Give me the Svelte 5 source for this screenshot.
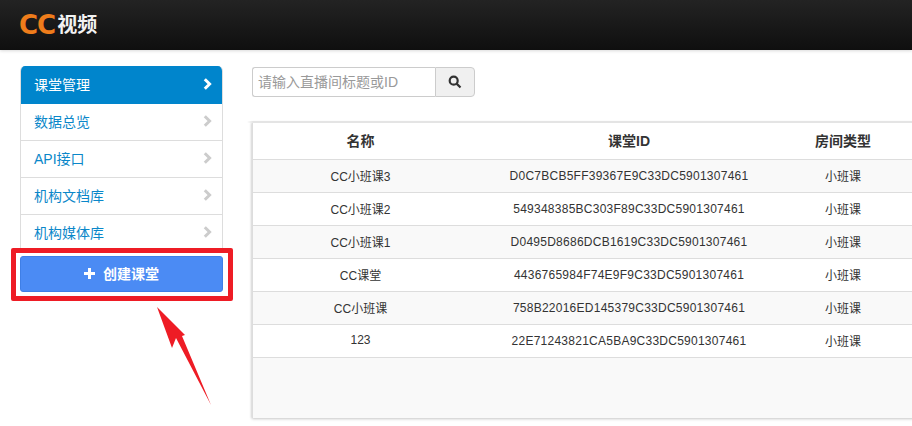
<script>
  const menu = ['数据总览', 'API接口', '机构文档库', '机构媒体库'];
  const rows = [
    ['CC小班课3', 'D0C7BCB5FF39367E9C33DC5901307461'],
    ['CC小班课2', '549348385BC303F89C33DC5901307461'],
    ['CC小班课1', 'D0495D8686DCB1619C33DC5901307461'],
    ['CC课堂', '4436765984F74E9F9C33DC5901307461'],
    ['CC小班课', '758B22016ED145379C33DC5901307461'],
    ['123', '22E71243821CA5BA9C33DC5901307461']
  ];
</script>

<div class="page">
  <header class="top">
    <span class="cc">CC</span><span class="video">视频</span>
  </header>
  <div class="body">
    <aside class="side">
      <nav class="menu">
        <a class="item active">
          <span>课堂管理</span>
          <svg class="chev" viewBox="0 0 9 12"><path d="M1.8 1.2 6.6 6 1.8 10.8" /></svg>
        </a>
        {#each menu as m}
          <a class="item">
            <span>{m}</span>
            <svg class="chev" viewBox="0 0 9 12"><path d="M1.8 1.2 6.6 6 1.8 10.8" /></svg>
          </a>
        {/each}
      </nav>
      <button class="create">
        <svg class="plus" viewBox="0 0 11 11"><path d="M4 0h3v4h4v3H7v4H4V7H0V4h4z" /></svg>
        <span>创建课堂</span>
      </button>
    </aside>
    <main class="main">
      <div class="search">
        <input placeholder="请输入直播间标题或ID" />
        <button class="go" aria-label="搜索">
          <svg viewBox="0 0 14 14"><circle cx="5.7" cy="5.7" r="4" /><path d="M8.6 8.6 12.5 12.5" /></svg>
        </button>
      </div>
      <section class="panel">
        <div class="row head">
          <div>名称</div><div>课堂ID</div><div>房间类型</div>
        </div>
        {#each rows as r}
          <div class="row">
            <div>{r[0]}</div><div class="id">{r[1]}</div><div>小班课</div>
          </div>
        {/each}
      </section>
    </main>
  </div>

  <div class="mark"></div>
  <svg class="arrow" viewBox="0 0 80 110"><polygon points="7,7 35,35 32,36 61,105 26,38 22,48" /></svg>
</div>

<style>
  :global(body) {
    margin: 0;
    background: #fff;
    overflow: hidden;
  }
  .page {
    position: relative;
    width: 912px;
    height: 426px;
    overflow: hidden;
    font-family: "Liberation Sans", "Noto Sans CJK SC", sans-serif;
    color: #333;
  }
  .top {
    height: 50px;
    box-sizing: border-box;
    padding-left: 19px;
    display: flex;
    align-items: center;
    gap: 2px;
    background: linear-gradient(#232323, #0f0f0f);
    box-shadow: 0 1px 3px rgba(0, 0, 0, .15);
  }
  .cc {
    font-family: "DejaVu Sans", "Liberation Sans", sans-serif;
    font-weight: 700;
    font-size: 26px;
    line-height: 1;
    color: #ee7c1b;
    letter-spacing: -1px;
  }
  .video {
    font-weight: 700;
    font-size: 20px;
    line-height: 1;
    color: #f2f2f2;
  }
  .body {
    display: flex;
    align-items: flex-start;
    padding: 16px 0 0 20px;
  }
  .side {
    width: 203px;
    flex: none;
  }
  .menu {
    display: flex;
    flex-direction: column;
    height: 184px;
    overflow: hidden;
    border: 1px solid #ddd;
    border-width: 0 1px;
    box-sizing: border-box;
    border-radius: 5px 5px 0 0;
  }
  .item {
    height: 37px;
    flex: none;
    box-sizing: border-box;
    padding: 0 10px 2px 13px;
    display: flex;
    align-items: center;
    justify-content: space-between;
    font-size: 14px;
    color: #0a87c9;
    border-bottom: 1px solid #ddd;
  }
  .item.active {
    height: 38px;
    margin: 0 -1px;
    padding: 0 11px 2px 14px;
    background: #0085cc;
    color: #fff;
    border-bottom: 0;
  }
  .chev {
    width: 9px;
    height: 12px;
    fill: none;
    stroke: #ccc;
    stroke-width: 3;
  }
  .active .chev {
    stroke: #fff;
  }
  .create {
    width: 203px;
    height: 36px;
    margin-top: 6px;
    padding: 0 0 2px;
    box-sizing: border-box;
    display: flex;
    align-items: center;
    justify-content: center;
    gap: 8px;
    background: #4b8bf4;
    border: 1px solid #3f7fe6;
    border-radius: 3px;
    color: #fff;
    font: 700 14px "Liberation Sans", "Noto Sans CJK SC", sans-serif;
  }
  .plus {
    width: 11px;
    height: 11px;
    fill: #fff;
  }
  .main {
    flex: 1;
    min-width: 0;
    padding-left: 29px;
  }
  .search {
    display: flex;
    height: 30px;
    width: 223px;
    margin-top: 1px;
  }
  .search input {
    width: 183px;
    box-sizing: border-box;
    height: 30px;
    border: 1px solid #ccc;
    border-right: 0;
    border-radius: 3px 0 0 3px;
    padding: 0 5px;
    font: 14px "Liberation Sans", "Noto Sans CJK SC", sans-serif;
    outline: none;
  }
  .search input::placeholder {
    color: #999;
    opacity: 1;
  }
  .go {
    width: 40px;
    height: 30px;
    padding: 0;
    box-sizing: border-box;
    background: #f0f0f0;
    border: 1px solid #ccc;
    border-radius: 0 4px 4px 0;
    display: flex;
    align-items: center;
    justify-content: center;
  }
  .go svg {
    width: 14px;
    height: 14px;
    fill: none;
    stroke: #333;
    stroke-width: 2.2;
  }
  .panel {
    position: relative;
    margin-top: 25px;
    width: 700px;
    height: 296px;
    box-sizing: border-box;
    background: #f9f9f9;
    border-left: 1px solid #ddd;
    box-shadow: 0 1px 3px rgba(0, 0, 0, .2), -1px 0 2px rgba(0, 0, 0, .08);
  }
  .panel::before {
    content: "";
    position: absolute;
    left: -6px;
    right: 0;
    top: -1px;
    height: 2px;
    background: linear-gradient(90deg, #fff, #e4e4e4 6px);
  }
  .row {
    display: grid;
    grid-template-columns: 215px 322px 106px 1fr;
    height: 33px;
    box-sizing: border-box;
    padding-bottom: 2px;
    align-items: center;
    text-align: center;
    font-size: 12px;
    color: #333;
    border-bottom: 1px solid #ddd;
    background: #fff;
  }
  .row:nth-child(even) {
    background: #f9f9f9;
  }
  .row.head {
    height: 38px;
    background: #fff;
    font-size: 14px;
    font-weight: 700;
  }
  .id {
    letter-spacing: .25px;
    padding-top: 2px;
  }
  .mark {
    position: absolute;
    left: 11px;
    top: 248px;
    width: 222px;
    height: 53px;
    box-sizing: border-box;
    border: 5px solid #ee1c25;
    border-radius: 2px;
  }
  .arrow {
    position: absolute;
    left: 150px;
    top: 300px;
    width: 80px;
    height: 110px;
    fill: #ee1c25;
  }
</style>
